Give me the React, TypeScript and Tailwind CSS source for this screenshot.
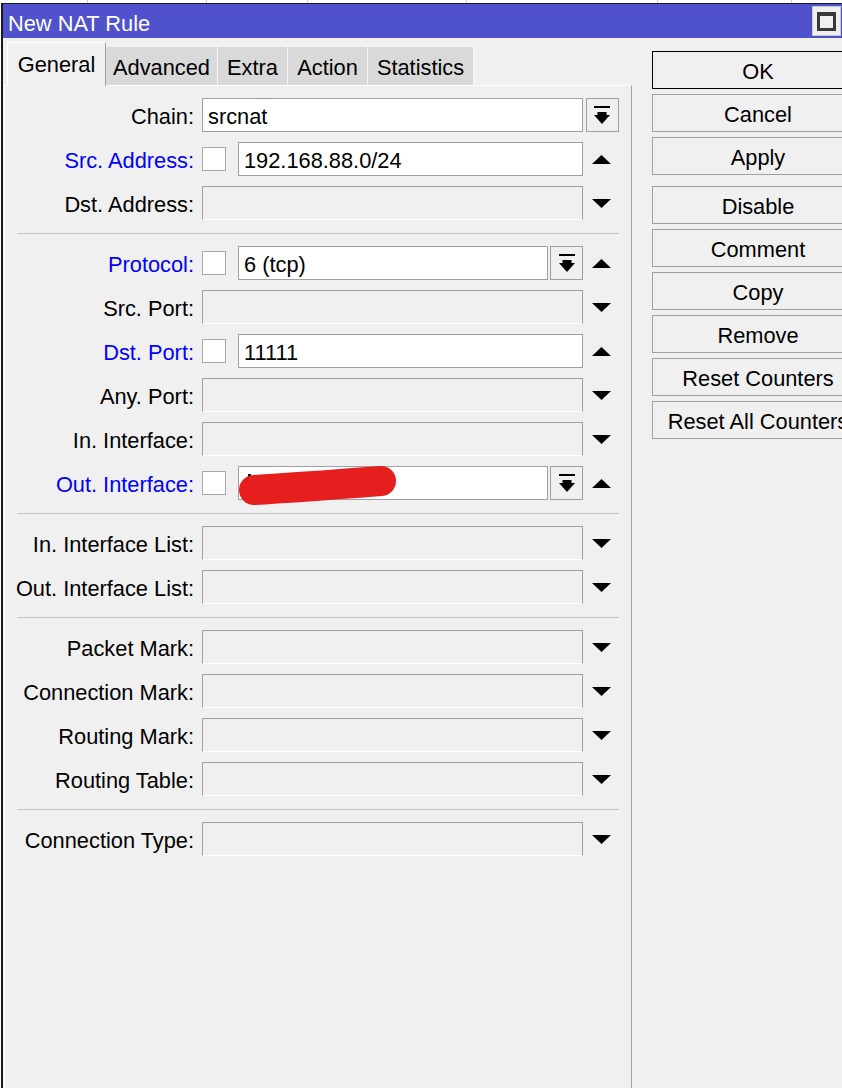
import React from "react";

type RowProps = {
  label: string;
  blue?: boolean;
  children: React.ReactNode;
  trail?: React.ReactNode;
};

function Row({ label, blue, children, trail }: RowProps) {
  return (
    <div className="flex h-[34px] items-center">
      <div className={`w-[189px] shrink-0 pt-[4px] text-right ${blue ? "text-[#0000ff]" : "text-black"}`}>{label}</div>
      <div className="ml-[8px] flex h-full w-[381px] shrink-0">{children}</div>
      <div className="flex h-full w-[36px] shrink-0 items-center justify-center">{trail}</div>
    </div>
  );
}

function Sep() {
  return <div className="mx-[12px] mt-[13px] mb-[12px] h-px bg-[#c4c4c4]" />;
}

function UpTri() {
  return (
    <svg width="19" height="9" viewBox="0 0 19 9">
      <polygon points="9.5,0 19,9 0,9" fill="#000" />
    </svg>
  );
}

function DownTri() {
  return (
    <svg width="19" height="9" viewBox="0 0 19 9">
      <polygon points="0,0 19,0 9.5,9" fill="#000" />
    </svg>
  );
}

function DropBtn({ className = "" }: { className?: string }) {
  return (
    <div className={`flex h-full w-[33px] shrink-0 items-center justify-center border border-[#a0a0a0] bg-[#f0f0f0] ${className}`}>
      <svg width="16" height="18" viewBox="0 0 16 18">
        <rect x="0" y="0" width="16" height="2" fill="#000" />
        <rect x="3.5" y="6" width="9" height="3.5" fill="#000" />
        <polygon points="0,9 16,9 8,18" fill="#000" />
      </svg>
    </div>
  );
}

function Check() {
  return <div className="mt-[5px] h-[24px] w-[24px] shrink-0 border border-[#a8a8a8] bg-white" />;
}

function Input({ value, className = "" }: { value?: string; className?: string }) {
  return (
    <div className={`relative flex h-full items-center border border-[#a0a0a0] bg-white pt-[4px] pl-[5px] ${className}`}>
      {value}
    </div>
  );
}

function Empty() {
  return <div className="h-full w-full border border-[#a0a0a0] border-b-white bg-[#f0f0f0]" />;
}

const tabs = [
  { name: "Advanced", w: "w-[112px]" },
  { name: "Extra", w: "w-[70px]" },
  { name: "Action", w: "w-[80px]" },
  { name: "Statistics", w: "w-[106px]" },
];

const buttons = ["OK", "Cancel", "Apply", "Disable", "Comment", "Copy", "Remove", "Reset Counters", "Reset All Counters"];

export default function App() {
  return (
    <div className="relative h-[1088px] w-[842px] overflow-hidden bg-white font-['Liberation_Sans',Arial,sans-serif] text-[21.8px] leading-none text-black">
      {/* list columns peeking above the window */}
      <div className="flex h-[3px]">
        <div className="w-[88px] border-r border-[#d0d0d0]" />
        <div className="w-[119px] border-r border-[#d0d0d0]" />
        <div className="w-[101px] border-r border-[#d0d0d0]" />
        <div className="w-[159px] border-r border-[#d0d0d0]" />
        <div className="w-[191px] border-r border-[#d0d0d0]" />
        <div className="w-[134px] border-r border-[#d0d0d0]" />
      </div>

      <div className="ml-px flex h-[1085px] flex-col border-t border-l-2 border-[#1a1a1a] bg-[#f0f0f0]">
        {/* title bar */}
        <div className="flex h-[34px] shrink-0 items-center justify-between bg-[#5052cd] pl-[5px] text-white">
          <span className="pt-[5px]">New NAT Rule</span>
          <div className="mr-px flex h-[30px] w-[29px] items-center justify-center border border-[#c8c8c8] bg-[#f0f0f0]">
            <div className="h-[19px] w-[19px] border-[3px] border-t-[4px] border-[#3a3a3a]" />
          </div>
        </div>

        <div className="flex flex-1">
          {/* left: tabs + panel */}
          <div className="flex w-[629px] shrink-0 flex-col">
            <div className="relative z-10 flex h-[48px] items-end pl-[4px]">
              <div className="flex h-[44px] w-[99px] items-start justify-center border-t border-l border-r border-white border-r-[#a0a0a0] bg-[#f0f0f0] pt-[11px]">
                General
              </div>
              {tabs.map((t) => (
                <div
                  key={t.name}
                  className={`mb-px flex h-[38px] ${t.w} items-center justify-center border-r border-[#f4f4f4] bg-[#d9d9d9] pt-[4px]`}
                >
                  {t.name}
                </div>
              ))}
            </div>

            <div className="-mt-px ml-px flex-1 border-t border-l border-r border-white border-r-[#a0a0a0] pt-[12px]">
              <div className="flex flex-col gap-[10px]">
                <Row label="Chain:" trail={<DropBtn className="ml-[2px]" />}>
                  <Input value="srcnat" className="w-[382px]" />
                </Row>
                <Row label="Src. Address:" blue trail={<UpTri />}>
                  <Check />
                  <Input value="192.168.88.0/24" className="ml-[12px] flex-1" />
                </Row>
                <Row label="Dst. Address:" trail={<DownTri />}>
                  <Empty />
                </Row>
              </div>
              <Sep />
              <div className="flex flex-col gap-[10px]">
                <Row label="Protocol:" blue trail={<UpTri />}>
                  <Check />
                  <Input value="6 (tcp)" className="ml-[12px] flex-1" />
                  <DropBtn className="ml-[2px]" />
                </Row>
                <Row label="Src. Port:" trail={<DownTri />}>
                  <Empty />
                </Row>
                <Row label="Dst. Port:" blue trail={<UpTri />}>
                  <Check />
                  <Input value="11111" className="ml-[12px] flex-1" />
                </Row>
                <Row label="Any. Port:" trail={<DownTri />}>
                  <Empty />
                </Row>
                <Row label="In. Interface:" trail={<DownTri />}>
                  <Empty />
                </Row>
                <Row label="Out. Interface:" blue trail={<UpTri />}>
                  <Check />
                  <div className="relative ml-[12px] flex-1 border border-[#a0a0a0] bg-white">
                    {/* redaction scribble */}
                    <svg className="absolute left-0 top-0 overflow-visible" width="160" height="40" viewBox="0 0 160 40">
                      <rect x="9" y="7" width="3" height="3" fill="#111" />
                      <path d="M15 23 C 50 21, 90 18, 142 14" stroke="#e61e1e" strokeWidth="30" strokeLinecap="round" fill="none" />
                    </svg>
                  </div>
                  <DropBtn className="ml-[2px]" />
                </Row>
              </div>
              <Sep />
              <div className="flex flex-col gap-[10px]">
                <Row label="In. Interface List:" trail={<DownTri />}>
                  <Empty />
                </Row>
                <Row label="Out. Interface List:" trail={<DownTri />}>
                  <Empty />
                </Row>
              </div>
              <Sep />
              <div className="flex flex-col gap-[10px]">
                <Row label="Packet Mark:" trail={<DownTri />}>
                  <Empty />
                </Row>
                <Row label="Connection Mark:" trail={<DownTri />}>
                  <Empty />
                </Row>
                <Row label="Routing Mark:" trail={<DownTri />}>
                  <Empty />
                </Row>
                <Row label="Routing Table:" trail={<DownTri />}>
                  <Empty />
                </Row>
              </div>
              <Sep />
              <Row label="Connection Type:" trail={<DownTri />}>
                <Empty />
              </Row>
            </div>
          </div>

          {/* right: action buttons */}
          <div className="ml-[20px] flex shrink-0 flex-col gap-[5px] pt-[13px]">
            {buttons.map((b) => (
              <div
                key={b}
                className={`flex h-[38px] w-[212px] items-center justify-center whitespace-nowrap bg-[#f0f0f0] pt-[4px] ${
                  b === "OK" ? "border border-black" : "border border-[#a0a0a0]"
                } ${b === "Disable" ? "mt-[6px]" : ""}`}
              >
                {b}
              </div>
            ))}
          </div>
        </div>
      </div>
    </div>
  );
}
